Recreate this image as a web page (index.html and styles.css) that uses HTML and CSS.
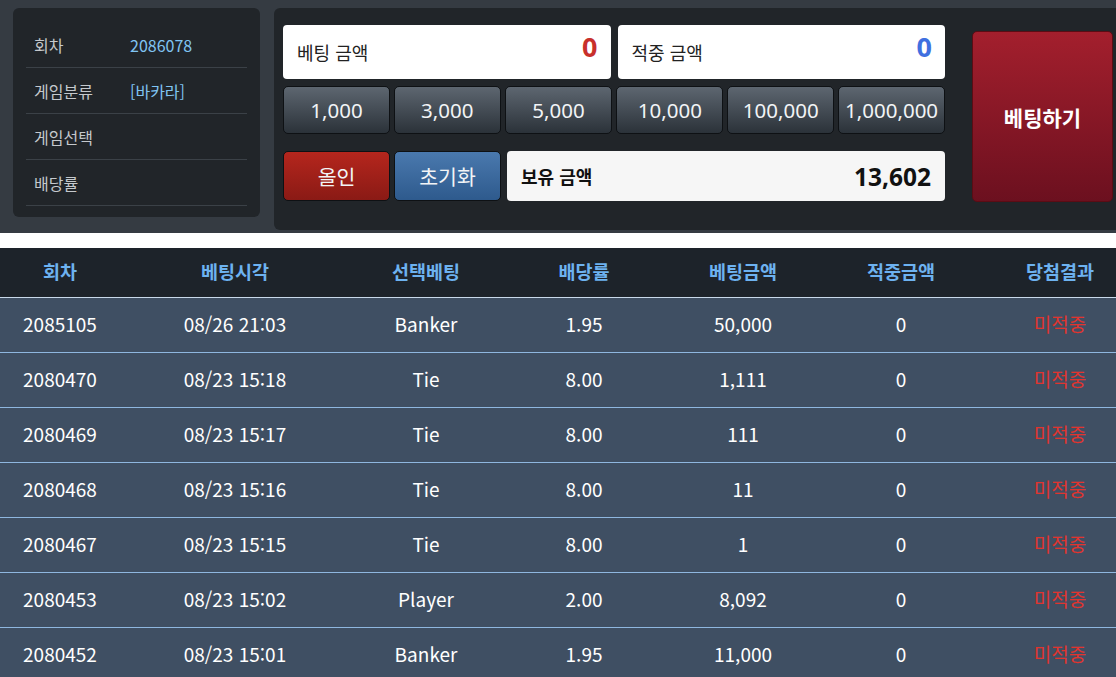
FILE: index.html
```html
<!DOCTYPE html>
<html lang="ko">
<head>
    <meta charset="UTF-8">
    <meta name="viewport" content="width=device-width, initial-scale=1.0">
    <title>베팅</title>
    <link rel="stylesheet" href="styles.css">
</head>
<body>
    <section class="bet-area">
        <div class="game-info">
            <div class="info-row"><span class="info-label">회차</span><span class="info-value">2086078</span></div>
            <div class="info-row"><span class="info-label">게임분류</span><span class="info-value">[바카라]</span></div>
            <div class="info-row"><span class="info-label">게임선택</span><span class="info-value"></span></div>
            <div class="info-row"><span class="info-label">배당률</span><span class="info-value"></span></div>
        </div>
        <div class="bet-panel">
            <div class="bet-controls">
                <div class="control-row">
                    <div class="amount-box">
                        <span>베팅 금액</span>
                        <span class="amount-value red">0</span>
                    </div>
                    <div class="amount-box">
                        <span>적중 금액</span>
                        <span class="amount-value blue">0</span>
                    </div>
                </div>
                <div class="control-row">
                    <button class="chip">1,000</button>
                    <button class="chip">3,000</button>
                    <button class="chip">5,000</button>
                    <button class="chip">10,000</button>
                    <button class="chip">100,000</button>
                    <button class="chip">1,000,000</button>
                </div>
                <div class="control-row last">
                    <button class="chip btn-allin">올인</button>
                    <button class="chip btn-reset">초기화</button>
                    <div class="balance-box">
                        <span>보유 금액</span>
                        <span class="balance-value">13,602</span>
                    </div>
                </div>
            </div>
            <button class="bet-btn">베팅하기</button>
        </div>
    </section>

    <table class="history">
        <thead>
            <tr>
                <th class="c1">회차</th>
                <th class="c2">베팅시각</th>
                <th class="c3">선택베팅</th>
                <th class="c4">배당률</th>
                <th class="c5">베팅금액</th>
                <th class="c6">적중금액</th>
                <th class="c7">당첨결과</th>
            </tr>
        </thead>
        <tbody>
            <tr><td>2085105</td><td>08/26 21:03</td><td>Banker</td><td>1.95</td><td>50,000</td><td>0</td><td class="lose">미적중</td></tr>
            <tr><td>2080470</td><td>08/23 15:18</td><td>Tie</td><td>8.00</td><td>1,111</td><td>0</td><td class="lose">미적중</td></tr>
            <tr><td>2080469</td><td>08/23 15:17</td><td>Tie</td><td>8.00</td><td>111</td><td>0</td><td class="lose">미적중</td></tr>
            <tr><td>2080468</td><td>08/23 15:16</td><td>Tie</td><td>8.00</td><td>11</td><td>0</td><td class="lose">미적중</td></tr>
            <tr><td>2080467</td><td>08/23 15:15</td><td>Tie</td><td>8.00</td><td>1</td><td>0</td><td class="lose">미적중</td></tr>
            <tr><td>2080453</td><td>08/23 15:02</td><td>Player</td><td>2.00</td><td>8,092</td><td>0</td><td class="lose">미적중</td></tr>
            <tr><td>2080452</td><td>08/23 15:01</td><td>Banker</td><td>1.95</td><td>11,000</td><td>0</td><td class="lose">미적중</td></tr>
        </tbody>
    </table>
</body>
</html>
```

FILE: styles.css
```css
body {
    margin: 0;
    padding: 0;
    background: #fff;
    font-family: "Noto Sans", "Noto Sans CJK KR", sans-serif;
    overflow: hidden;
}
/* 상단 베팅 영역 */
.bet-area {
    display: flex;
    align-items: flex-start;
    gap: 14px;
    padding: 8px 0 3px 13px;
    background: #353b42;
    margin-bottom: 15px;
}
.game-info {
    width: 221px;
    height: 195px;
    padding: 14px 13px 0 13px;
    background: #212529;
    border-radius: 6px;
}
.info-row {
    display: flex;
    align-items: center;
    height: 45px;
    padding-left: 8px;
    border-bottom: 1px solid #3b4147;
    font-family: "Noto Sans CJK KR", sans-serif;
    font-size: 16px;
}
.info-label {
    width: 96px;
    color: #c5c9cd;
}
.info-value {
    color: #80c4f2;
}
.bet-panel {
    flex: 1;
    display: flex;
    align-items: flex-start;
    height: 205px;
    padding: 17px 3px 0 9px;
    background: #212529;
    border-radius: 6px 0 0 6px;
}
.bet-controls {
    width: 662px;
    display: flex;
    flex-direction: column;
    gap: 7px;
}
.control-row {
    display: flex;
    gap: 4px;
}
.control-row.last {
    margin-top: 10px;
}
.amount-box {
    flex: 1;
    height: 54px;
    display: flex;
    justify-content: space-between;
    align-items: center;
    padding: 0 13px 0 14px;
    background: #fff;
    border-radius: 4px;
    font-family: "Noto Sans CJK KR", sans-serif;
    font-size: 18px;
    color: #222;
}
.amount-box:first-child {
    margin-right: 3px;
}
.amount-value {
    align-self: flex-start;
    margin-top: 3px;
    font-family: "Noto Sans", sans-serif;
    font-size: 27px;
    font-weight: bold;
}
.red {
    color: #c8302b;
}
.blue {
    color: #4070e0;
}
.chip {
    width: 107px;
    height: 48px;
    padding: 0;
    border: 1px solid #0e1114;
    border-radius: 5px;
    background: linear-gradient(#5d6670, #2b3239);
    color: #f2f4f6;
    font-family: "Noto Sans", "Noto Sans CJK KR", sans-serif;
    font-size: 20.5px;
    cursor: pointer;
}
.chip:nth-child(3) {
    width: 108px;
}
.control-row.last .chip {
    height: 50px;
    font-family: "Noto Sans CJK KR", sans-serif;
    font-size: 20.5px;
}
.btn-allin {
    background: linear-gradient(#b5261d, #8a1a15);
}
.btn-reset {
    background: linear-gradient(#4a79ae, #2e5a8d);
}
.balance-box {
    flex: 1;
    height: 50px;
    display: flex;
    justify-content: space-between;
    align-items: center;
    margin-left: 2px;
    padding: 0 14px 0 14px;
    background: #f6f6f6;
    border-radius: 4px;
    font-family: "Noto Sans CJK KR", sans-serif;
    font-size: 18px;
    font-weight: bold;
    color: #111;
}
.balance-value {
    font-family: "Noto Sans", sans-serif;
    font-size: 24.5px;
}
.bet-btn {
    width: 141px;
    height: 171px;
    margin: 6px 0 0 27px;
    border: 1px solid #5b0c14;
    border-radius: 5px;
    background: linear-gradient(#a31f2d, #6c101f);
    color: #fff;
    font-family: "Noto Sans CJK KR", sans-serif;
    font-size: 21px;
    font-weight: bold;
    cursor: pointer;
}
/* 베팅 내역 테이블 */
.history {
    width: 1138px;
    border-collapse: collapse;
    font-family: "Noto Sans CJK KR", sans-serif;
    font-size: 19px;
    text-align: center;
}
.history th {
    height: 46px;
    padding: 0 0 3px 0;
    background: #1d232a;
    color: #6db2f0;
    font-size: 18.5px;
    font-weight: bold;
    border-bottom: 1px solid #c9d9ea;
}
.history td {
    height: 51px;
    padding: 0 0 3px 0;
    background: #3f4f63;
    color: #fff;
    border-bottom: 1px solid #8fb7df;
}
.history td.lose {
    color: #e0342f;
}
.c1 { width: 120px; }
.c2 { width: 230px; }
.c3 { width: 152px; }
.c4 { width: 164px; }
.c5 { width: 154px; }
.c6 { width: 162px; }
.c7 { width: 156px; }
```
